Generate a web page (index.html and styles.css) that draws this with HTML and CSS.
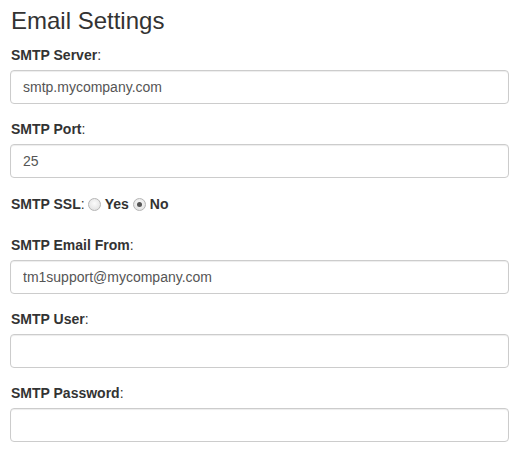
FILE: index.html
```html
<!DOCTYPE html>
<html lang="en">
<head>
  <meta charset="UTF-8">
  <title>Email Settings</title>
  <link rel="stylesheet" href="styles.css">
</head>
<body>
  <div class="container">
    <h3>Email Settings</h3>

    <div class="form-group">
      <label><strong>SMTP Server</strong>:</label>
      <input class="form-control" type="text" value="smtp.mycompany.com">
    </div>

    <div class="form-group">
      <label><strong>SMTP Port</strong>:</label>
      <input class="form-control" type="text" value="25">
    </div>

    <div class="form-group radio-row">
      <label><strong>SMTP SSL</strong>:</label>
      <span class="radio"></span><strong>Yes</strong>
      <span class="radio checked"></span><strong>No</strong>
    </div>

    <div class="form-group">
      <label><strong>SMTP Email From</strong>:</label>
      <input class="form-control" type="text" value="tm1support@mycompany.com">
    </div>

    <div class="form-group">
      <label><strong>SMTP User</strong>:</label>
      <input class="form-control" type="text" value="">
    </div>

    <div class="form-group">
      <label><strong>SMTP Password</strong>:</label>
      <input class="form-control" type="password" value="">
    </div>
  </div>
</body>
</html>
```

FILE: styles.css
```css
body {
  margin: 0;
  background-color: #fff;
  color: #333;
  font-family: "Liberation Sans", Arial, sans-serif;
  font-size: 14px;
  line-height: 20px;
}

.container {
  padding: 0 10px;
}

h3 {
  font-size: 24px;
  font-weight: normal;
  line-height: 26px;
  margin: 8px 0 11px;
  padding-left: 1px;
}

.form-group {
  margin-bottom: 15px;
}

label {
  display: block;
  margin-bottom: 5px;
  padding-left: 1px;
  color: #333;
}

.form-control {
  display: block;
  box-sizing: border-box;
  width: 100%;
  height: 34px;
  padding: 6px 12px;
  font-family: inherit;
  font-size: 14px;
  color: #555;
  background-color: #fff;
  border: 1px solid #ccc;
  border-radius: 4px;
  box-shadow: inset 0 1px 1px rgba(0, 0, 0, 0.075);
  outline: none;
}

.radio-row {
  display: flex;
  align-items: center;
  height: 20px;
  padding-top: 1px;
  margin-bottom: 21px;
}

.radio-row label {
  display: inline;
  margin: 0 3px 0 0;
}

.radio {
  box-sizing: border-box;
  width: 13px;
  height: 13px;
  border: 1px solid #b5b5b5;
  border-radius: 50%;
  background: radial-gradient(circle at 50% 40%, #fbfbfb, #dcdcdc);
  margin-right: 4px;
  position: relative;
}

.radio + strong {
  margin-right: 4px;
}

.radio.checked::after {
  content: "";
  position: absolute;
  left: 3px;
  top: 3px;
  width: 5px;
  height: 5px;
  border-radius: 50%;
  background: #555;
}
```
